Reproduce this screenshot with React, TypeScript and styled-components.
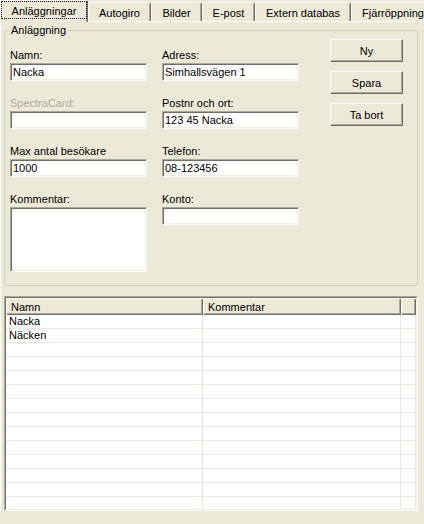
import React from 'react';
import styled, { createGlobalStyle, css } from 'styled-components';

const face = '#ECE9D8';
const dark = '#716F64';
const shade = '#ACA899';
const light = '#F1EFE2';
const grid = '#EAE8DF';

const GlobalStyle = createGlobalStyle`
  body {
    margin: 0;
    background: ${face};
  }
  * {
    box-sizing: border-box;
  }
`;

const Window = styled.div`
  width: 424px;
  height: 524px;
  overflow: hidden;
  background: ${face};
  font-family: 'Liberation Sans', Arial, sans-serif;
  font-size: 11px;
  color: #000;
`;

const TabStrip = styled.div`
  display: flex;
  align-items: flex-end;
  height: 21px;
`;

const Tab = styled.div<{ $active?: boolean; $width: number }>`
  flex: none;
  width: ${({ $width }) => $width}px;
  height: 19px;
  padding-top: 4px;
  border-top: 1px solid #fff;
  border-left: 1px solid #fff;
  border-right: 1px solid ${dark};
  border-radius: 2px 2px 0 0;
  box-shadow: inset -1px 0 ${shade};
  line-height: 13px;
  text-align: center;
  white-space: nowrap;
  overflow: hidden;

  ${({ $active }) =>
    $active &&
    css`
      position: relative;
      z-index: 1;
      height: 22px;
      margin-bottom: -1px;
      padding-top: 0;
      background: ${face};
    `}
`;

const FocusBox = styled.div`
  height: 18px;
  padding-top: 3px;
  border: 1px dotted #000;
`;

const TabPage = styled.div`
  padding: 2px 0 0 3px;
  border-top: 1px solid #fff;
  border-left: 1px solid #fff;
`;

const GroupBox = styled.fieldset`
  display: flex;
  align-items: flex-start;
  width: 414px;
  margin: 0;
  padding: 2px 14px 13px 5px;
  border: 1px solid #d0d0bf;
  border-radius: 3px;
`;

const Legend = styled.legend`
  padding: 0 1px;
  line-height: 13px;
`;

const FieldGrid = styled.div`
  display: grid;
  grid-template-columns: 137px 137px;
  column-gap: 15px;
  row-gap: 16px;
  padding-top: 10px;
`;

const Field = styled.label`
  display: flex;
  flex-direction: column;
`;

const Caption = styled.span<{ $disabled?: boolean }>`
  line-height: 13px;
  margin-bottom: 1px;
  color: ${({ $disabled }) => ($disabled ? shade : '#000')};
`;

const sunken = css`
  width: 137px;
  margin: 0;
  padding: 0 2px;
  border: 1px solid;
  border-color: ${shade} #fff #fff ${shade};
  box-shadow: inset 1px 1px ${dark}, inset -1px -1px ${light};
  background: #fff;
  font: inherit;
  line-height: 14px;
  color: #000;
  outline: none;
`;

const TextBox = styled.input`
  ${sunken};
  height: 18px;
`;

const TextArea = styled.textarea`
  ${sunken};
  height: 65px;
  resize: none;
`;

const ButtonColumn = styled.div`
  display: flex;
  flex-direction: column;
  gap: 9px;
  margin-left: 31px;
`;

const Button = styled.button`
  width: 73px;
  height: 23px;
  padding: 0;
  background: ${face};
  border: 1px solid;
  border-color: #fff ${dark} ${dark} #fff;
  box-shadow: inset -1px -1px ${shade};
  font: inherit;
  color: #000;
`;

const ListOuter = styled.div`
  width: 414px;
  height: 215px;
  margin-top: 10px;
  border: 1px solid;
  border-color: ${shade} #fff #fff ${shade};
`;

const ListInner = styled.div`
  height: 100%;
  overflow: hidden;
  background: #fff;
  border: 1px solid;
  border-color: ${dark} ${light} ${light} ${dark};
`;

const columns = '197px 198px 15px';

const HeaderRow = styled.div`
  display: grid;
  grid-template-columns: ${columns};
  height: 17px;
`;

const HeaderCell = styled.div`
  padding: 1px 0 0 5px;
  line-height: 16px;
  background: ${face};
  box-shadow: inset 1px 1px #fff, inset -1px -1px ${dark}, inset -2px -2px ${shade};
`;

const Row = styled.div`
  display: grid;
  grid-template-columns: ${columns};
  height: 14px;
`;

const Cell = styled.div`
  padding-left: 3px;
  line-height: 13px;
  border-right: 1px solid ${grid};
  border-bottom: 1px solid ${grid};
  white-space: nowrap;
`;

const tabs = [
  { label: 'Anläggningar', width: 88 },
  { label: 'Autogiro', width: 63 },
  { label: 'Bilder', width: 51 },
  { label: 'E-post', width: 53 },
  { label: 'Extern databas', width: 96 },
  { label: 'Fjärröppning', width: 84 },
];

const leftFields = [
  { label: 'Namn:', value: 'Nacka' },
  { label: 'Adress:', value: 'Simhallsvägen 1' },
  { label: 'SpectraCard:', value: '', disabled: true },
  { label: 'Postnr och ort:', value: '123 45 Nacka' },
  { label: 'Max antal besökare', value: '1000' },
  { label: 'Telefon:', value: '08-123456' },
];

const rows = ['Nacka', 'Näcken', '', '', '', '', '', '', '', '', '', '', '', '', ''];

export default function App() {
  return (
    <Window>
      <GlobalStyle />
      <TabStrip>
        {tabs.map((t, i) =>
          i === 0 ? (
            <Tab key={t.label} $width={t.width} $active>
              <FocusBox>{t.label}</FocusBox>
            </Tab>
          ) : (
            <Tab key={t.label} $width={t.width}>
              {t.label}
            </Tab>
          )
        )}
      </TabStrip>
      <TabPage>
        <GroupBox>
          <Legend>Anläggning</Legend>
          <FieldGrid>
            {leftFields.map((f) => (
              <Field key={f.label}>
                <Caption $disabled={f.disabled}>{f.label}</Caption>
                <TextBox defaultValue={f.value} />
              </Field>
            ))}
            <Field>
              <Caption>Kommentar:</Caption>
              <TextArea />
            </Field>
            <Field>
              <Caption>Konto:</Caption>
              <TextBox />
            </Field>
          </FieldGrid>
          <ButtonColumn>
            <Button type="button">Ny</Button>
            <Button type="button">Spara</Button>
            <Button type="button">Ta bort</Button>
          </ButtonColumn>
        </GroupBox>
        <ListOuter>
          <ListInner>
            <HeaderRow>
              <HeaderCell>Namn</HeaderCell>
              <HeaderCell>Kommentar</HeaderCell>
              <HeaderCell />
            </HeaderRow>
            {rows.map((name, i) => (
              <Row key={i}>
                <Cell>{name}</Cell>
                <Cell />
                <Cell />
              </Row>
            ))}
          </ListInner>
        </ListOuter>
      </TabPage>
    </Window>
  );
}
